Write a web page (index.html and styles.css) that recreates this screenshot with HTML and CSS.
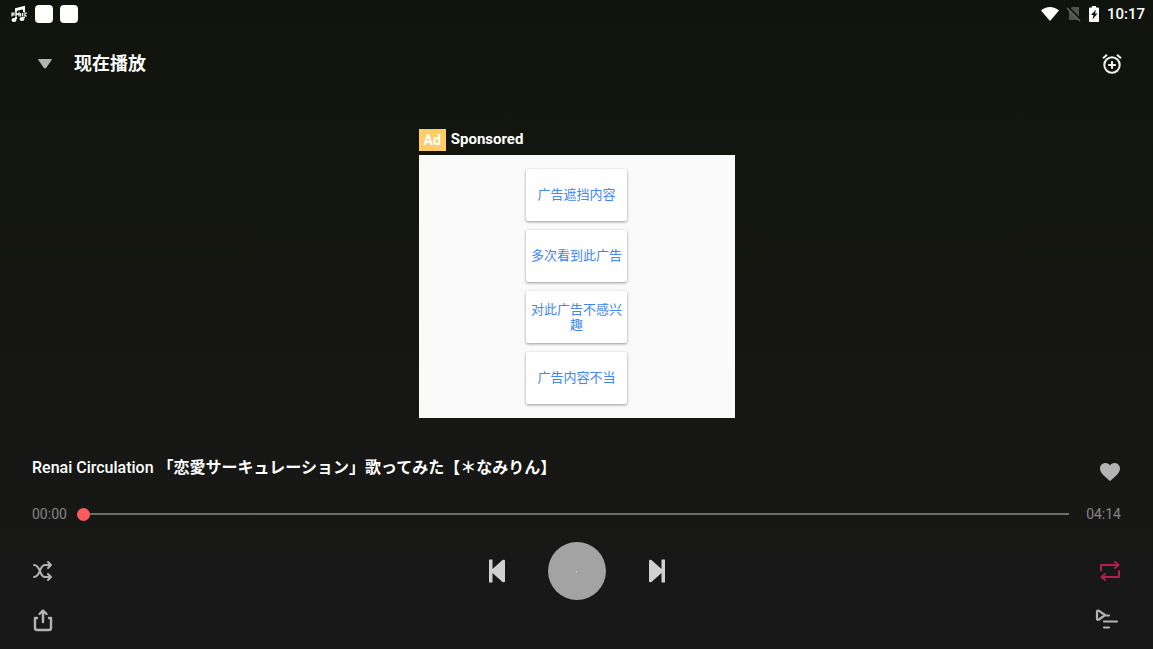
FILE: index.html
```html
<!DOCTYPE html>
<html lang="zh-CN">
<head>
<meta charset="utf-8">
<meta name="viewport" content="width=device-width, initial-scale=1">
<title>现在播放</title>
<link rel="stylesheet" href="styles.css">
</head>
<body>
<div class="status">
  <svg class="note" width="18" height="18" viewBox="0 0 18 18" aria-hidden="true">
    <path d="M6 14V4l8-2v11M6 5l8-2" fill="none" stroke="#fff" stroke-width="2"/>
    <ellipse cx="4" cy="15" rx="2.500" ry="2" fill="#fff"/><ellipse cx="12" cy="14" rx="2.500" ry="2" fill="#fff"/>
    <path d="M0 7h18v5H0z" fill="#11140d" opacity=".75"/>
    <path d="M2 11.500V8h2v2H2M6 11.500V8l1.500 1.500L9 8v3.500M10.500 8v3.500M12.500 8v3.500M17 8h-2v3h2" fill="none" stroke="#fff" stroke-width="1.200"/>
  </svg>
  <span class="app-dot"></span>
  <span class="app-dot"></span>
  <span class="spacer"></span>
  <svg class="wifi" width="20" height="16" viewBox="0 0 20 16" aria-hidden="true"><path d="M1 4.500C6-.2 14-.2 19 4.500L10 15z" fill="#fff"/></svg>
  <svg class="sim" width="14" height="16" viewBox="0 0 14 16" aria-hidden="true"><path d="M5 1h7v13H2V4z" fill="#50524c"/><path d="M1 1L14 14" stroke="#11140d" stroke-width="2"/><path d="M0 2l13 13" stroke="#666863" stroke-width="1.400"/></svg>
  <svg class="battery" width="12" height="16" viewBox="0 0 12 16" aria-hidden="true"><path d="M4 0h4v1.500h2q1 0 1 1V15q0 1-1 1H2q-1 0-1-1V2.500q0-1 1-1h2z" fill="#fff"/><path d="M8 3.500L3 9h2.500L4.500 13.500 9.500 7.500H7z" fill="#11140d"/></svg>
  <time class="clock">10:17</time>
</div>
<header class="header">
  <button class="icon-btn" aria-label="收起"><svg width="16" height="12" viewBox="0 0 16 12"><path d="M2 1h12q1.500 0 .5 1.300L9.300 9.800q-1.300 1.500-2.600 0L1.500 2.300Q.5 1 2 1z" fill="#b2b3b0"/></svg></button>
  <h1 class="heading">现在播放</h1>
  <span class="spacer"></span>
  <button class="icon-btn" aria-label="定时"><svg width="22" height="22" viewBox="0 0 22 22" fill="none" stroke="#f2f2f2" stroke-width="2"><circle cx="11" cy="12" r="7.700"/><path d="M11 8.200v7.600M7.200 12h7.600M2 5.200l4-3.400M20 5.200l-4-3.400"/></svg></button>
</header>
<main class="stage">
  <section class="ad">
    <div class="ad-label"><span class="ad-badge">Ad</span>Sponsored</div>
    <div class="ad-panel">
      <button class="reason">广告遮挡内容</button>
      <button class="reason">多次看到此广告</button>
      <button class="reason">对此广告不感兴趣</button>
      <button class="reason">广告内容不当</button>
    </div>
  </section>
</main>
<footer class="player">
  <div class="row track">
    <h2 class="song">Renai Circulation <span class="song-ja" lang="ja">「恋愛サーキュレーション」歌ってみた【＊なみりん】</span></h2>
    <button class="icon-btn" aria-label="收藏"><svg width="22" height="20" viewBox="0 0 22 20"><path d="M11 19C7 15.500 1 11.500 1 6.500 1 1 8-1 11 3.500 14-1 21 1 21 6.500c0 5-6 9-10 12.500z" fill="#b3b3b3"/></svg></button>
  </div>
  <div class="row progress">
    <span>00:00</span>
    <input class="seek" type="range" min="0" max="254" value="0" aria-label="播放进度">
    <span>04:14</span>
  </div>
  <div class="row controls">
    <button class="icon-btn" aria-label="随机播放"><svg width="22" height="22" viewBox="0 0 22 22" fill="none" stroke="#b3b3b3" stroke-width="2" stroke-linecap="round" stroke-linejoin="round"><path d="M2 5c7 0 5 12 11 12h6M2 17c7 0 5-12 11-12h6M16 2l3 3-3 3M16 14l3 3-3 3"/></svg></button>
    <div class="transport">
      <button class="icon-btn" aria-label="上一首"><svg width="18" height="24" viewBox="0 0 18 24" fill="#d0d0d0"><path d="M1 1q0-.5.500-.5h2.500q.5 0 .5.500v9L14.500 1Q17 0 17 2v20q0 2-2.500 1L4.500 14v9q0 .5-.5.500H1.500Q1 23.500 1 23z"/></svg></button>
      <button class="play" aria-label="播放"><span class="play-dot"></span></button>
      <button class="icon-btn" aria-label="下一首"><svg width="18" height="24" viewBox="0 0 18 24" fill="#d0d0d0"><path d="M17 1q0-.5-.5-.5H14q-.5 0-.5.500v9L3.500 1Q1 0 1 2v20q0 2 2.500 1l10-9v9q0 .5.500.500h2.500q.5 0 .5-.500z"/></svg></button>
    </div>
    <button class="icon-btn" aria-label="循环播放"><svg width="22" height="22" viewBox="0 0 22 22" fill="none" stroke="#b01e54" stroke-width="2" stroke-linecap="round" stroke-linejoin="round"><path d="M2 10.500V5h17M16 2l3.500 3L16 8M20 11v6H3M6 14l-3.500 3L6 20"/></svg></button>
  </div>
  <div class="row extras">
    <button class="icon-btn" aria-label="分享"><svg width="22" height="24" viewBox="0 0 22 24" fill="none" stroke="#b3b3b3" stroke-width="2.400" stroke-linecap="round" stroke-linejoin="round"><path d="M5 10H3v10q0 2 2 2h12q2 0 2-2V10h-2M11 14V3M7.500 6L11 2.500 14.500 6"/></svg></button>
    <button class="icon-btn queue" aria-label="播放列表"><svg width="24" height="22" viewBox="0 0 24 22" fill="none" stroke="#b3b3b3" stroke-width="2.200" stroke-linecap="round" stroke-linejoin="round"><path d="M2 3q0-2 2-1.200L10 6l-6 4.500Q2 11.500 2 9.500zM10 6.500h4M9 12.500h13M9 18.500h5"/></svg></button>
  </div>
</footer>
</body>
</html>
```
FILE: styles.css
```css
* { box-sizing: border-box; }
body {
  margin: 0;
  min-height: 100vh;
  display: flex;
  flex-direction: column;
  background: linear-gradient(#11140d, #151611 50%, #181818 90%);
  color: #fff;
  font-family: Roboto, "Noto Sans CJK SC", sans-serif;
}
button {
  border: 0;
  margin: 0;
  padding: 0;
  background: none;
  font-family: inherit;
  cursor: pointer;
}
svg { display: block; }
.spacer { flex: 1; }
.icon-btn {
  display: flex;
  align-items: center;
  justify-content: center;
  min-width: 22px;
  height: 24px;
}
.status {
  display: flex;
  align-items: center;
  height: 27px;
  padding: 0 8px 0 10px;
}
.app-dot {
  width: 18px;
  height: 18px;
  margin-left: 7px;
  border-radius: 4px;
  background: #fff;
}
.sim { margin-left: 7px; }
.battery { margin-left: 7px; }
.clock {
  margin-left: 7px;
  font-size: 15px;
  font-weight: 500;
  line-height: 28px;
}
.header {
  display: flex;
  align-items: center;
  height: 73px;
  padding: 0 30px 0 34px;
}
.heading {
  margin: 0 0 0 18px;
  font-size: 18px;
  line-height: 24px;
  font-weight: 700;
}
.stage {
  flex: 1;
  display: flex;
  align-items: flex-start;
  justify-content: center;
  padding: 28px 16px;
}
.ad { width: 316px; }
.ad-label {
  display: flex;
  align-items: center;
  gap: 5px;
  margin-bottom: 4px;
  font-size: 15px;
  font-weight: 700;
  line-height: 23px;
}
.ad-badge {
  padding: 0 5px;
  background: #ffcc66;
  font-size: 14px;
  line-height: 22px;
}
.ad-panel {
  display: flex;
  flex-direction: column;
  align-items: center;
  gap: 9px;
  padding: 14px 0;
  background: #fafafa;
}
.reason {
  width: 101px;
  height: 52px;
  padding: 0 4px 1px;
  border-radius: 2px;
  background: #fff;
  box-shadow: 0 1px 3px rgba(0, 0, 0, .4);
  color: #4285f4;
  font-size: 13px;
  line-height: 15px;
}
.player { padding: 0 32px 17px; }
.row {
  display: flex;
  align-items: center;
  justify-content: space-between;
}
.track {
  align-items: flex-start;
  height: 30px;
}
.track .icon-btn { margin-top: 4px; }
.song {
  margin: 0;
  font-family: Roboto, "Noto Sans CJK JP", sans-serif;
  font-size: 16px;
  line-height: 24px;
  font-weight: 500;
}
.song-ja { font-weight: 700; }
.progress {
  height: 56px;
  gap: 10px;
  color: #858585;
  font-size: 14px;
}
.seek {
  -webkit-appearance: none;
  appearance: none;
  flex: 1;
  min-width: 0;
  height: 16px;
  margin: 0 7px 0 0;
  background: linear-gradient(#6c6c6c, #6c6c6c) center / 100% 2px no-repeat;
}
.seek::-webkit-slider-thumb {
  -webkit-appearance: none;
  width: 13px;
  height: 13px;
  border: 0;
  border-radius: 50%;
  background: #ff5a5f;
}
.controls { height: 58px; }
.transport {
  display: flex;
  align-items: center;
  gap: 40px;
}
.play {
  display: flex;
  align-items: center;
  justify-content: center;
  width: 58px;
  height: 58px;
  border-radius: 50%;
  background: #a3a3a3;
}
.play-dot {
  width: 1px;
  height: 1px;
  background: #ddd;
}
.extras {
  padding-top: 8px;
}
.extras .queue { margin-right: 2px; }
```
